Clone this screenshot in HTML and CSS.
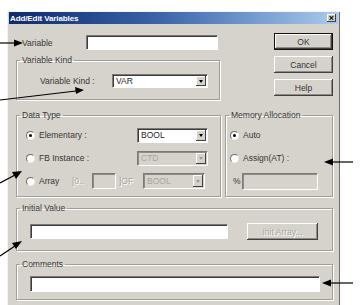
FILE: index.html
```html
<!DOCTYPE html>
<html lang="en">
<head>
  <meta charset="UTF-8">
  <meta name="viewport" content="width=device-width, initial-scale=1.0">
  <title>Add/Edit Variables</title>
  <link rel="stylesheet" href="styles.css">
</head>
<body>
  <div class="dialog">
    <div class="titlebar">
      <span class="title">Add/Edit Variables</span>
      <span class="close">&#215;</span>
    </div>

    <div class="content">
      <div class="top">
        <div class="top-left">
          <div class="var-row">
            <span class="lbl">Variable</span>
            <span class="edit var-edit"></span>
          </div>
          <fieldset class="group kind">
            <legend>Variable Kind</legend>
            <div class="kind-row">
              <span class="lbl">Variable Kind :</span>
              <span class="combo kind-combo"><span class="val">VAR</span><span class="drop"></span></span>
            </div>
          </fieldset>
        </div>
        <div class="buttons">
          <span class="btn default">OK</span>
          <span class="btn">Cancel</span>
          <span class="btn">Help</span>
        </div>
      </div>

      <div class="mid">
        <fieldset class="group datatype">
          <legend>Data Type</legend>
          <div class="dt-rows">
            <div class="dt-row">
              <span class="opt"><span class="radio on"></span>Elementary :</span>
              <span class="combo dt-combo"><span class="val">BOOL</span><span class="drop"></span></span>
            </div>
            <div class="dt-row">
              <span class="opt"><span class="radio"></span>FB Instance :</span>
              <span class="combo dt-combo off"><span class="val">CTD</span><span class="drop"></span></span>
            </div>
            <div class="dt-row">
              <span class="opt short"><span class="radio"></span>Array</span>
              <span class="dim range">[0..</span>
              <span class="edit off size-edit"></span>
              <span class="dim of">]OF</span>
              <span class="combo arr-combo off"><span class="val">BOOL</span><span class="drop"></span></span>
            </div>
          </div>
        </fieldset>

        <fieldset class="group memory">
          <legend>Memory Allocation</legend>
          <div class="mem-rows">
            <div class="mem-row"><span class="radio on"></span>Auto</div>
            <div class="mem-row"><span class="radio"></span>Assign(AT) :</div>
            <div class="mem-row pct"><span class="lbl">%</span><span class="edit off at-edit"></span></div>
          </div>
        </fieldset>
      </div>

      <fieldset class="group initial">
        <legend>Initial Value</legend>
        <div class="init-row">
          <span class="edit init-edit"></span>
          <span class="btn off init-btn">Init Array...</span>
        </div>
      </fieldset>

      <fieldset class="group comments">
        <legend>Comments</legend>
        <div class="comment-row">
          <span class="edit comment-edit"></span>
        </div>
      </fieldset>
    </div>
  </div>

  <!-- callout arrows drawn over the screenshot -->
  <svg class="arrows" width="360" height="305" viewBox="0 0 360 305">
    <g stroke="#000" stroke-width="1.2" fill="none">
      <line x1="0" y1="43" x2="15" y2="43"/>
      <line x1="0" y1="100" x2="76" y2="91"/>
      <line x1="0" y1="183" x2="15" y2="175"/>
      <line x1="353" y1="162" x2="332" y2="162"/>
      <line x1="0" y1="256" x2="15" y2="246"/>
      <line x1="353" y1="283" x2="330" y2="283"/>
    </g>
    <g fill="#000">
      <polygon points="23,43 14,39.5 14,46.5"/>
      <polygon points="84,90 75,87 76,94"/>
      <polygon points="22,171 12,172 16,179"/>
      <polygon points="324,162 333,158.5 333,165.5"/>
      <polygon points="22,241 12,243 16,249"/>
      <polygon points="322,283 331,279.5 331,286.5"/>
    </g>
  </svg>
</body>
</html>
```

FILE: styles.css
```css
body {
  margin: 0;
  width: 360px;
  height: 305px;
  overflow: hidden;
  background: #fff;
  font-family: "Liberation Sans", Arial, sans-serif;
  font-size: 8.5px;
  color: #363636;
  position: relative;
}

.dialog {
  margin: 11px 0 0 7px;
  width: 333px;
  height: 294px;
  box-sizing: border-box;
  padding: 1px 2px 0 2px;
  background: #d6d3cc;
  box-shadow: inset 1px 1px 0 #f4f3f0, inset -1px 0 0 #6e6c68;
}

.titlebar {
  height: 12px;
  display: flex;
  align-items: center;
  justify-content: space-between;
  padding: 0 2px 0 1px;
  background: linear-gradient(to right, #0d2a6e, #3a63a8 45%, #a9cbef);
}

.title {
  color: #fff;
  font-weight: bold;
  font-size: 8px;
  letter-spacing: -0.1px;
}

.close {
  width: 9px;
  height: 8px;
  line-height: 8px;
  text-align: center;
  font-size: 9px;
  font-weight: bold;
  color: #000;
  background: #d6d3cc;
  box-shadow: inset -1px -1px 0 #404040, inset 1px 1px 0 #fff;
}

.content {
  padding: 0 5px 0 7px;
}

.lbl {
  white-space: nowrap;
}

/* sunken edit box */
.edit {
  display: block;
  box-sizing: border-box;
  background: #fff;
  border: 1px solid;
  border-color: #7c7a76 #fff #fff #7c7a76;
  box-shadow: inset 1px 1px 0 #3c3b39;
}

.edit.off {
  background: #d6d3cc;
  box-shadow: inset 1px 1px 0 #8e8c88;
}

/* combo box */
.combo {
  display: flex;
  align-items: center;
  box-sizing: border-box;
  background: #fff;
  border: 1px solid;
  border-color: #7c7a76 #fff #fff #7c7a76;
  box-shadow: inset 1px 1px 0 #3c3b39;
}

.combo .val {
  flex: 1;
  padding-left: 3px;
  color: #1e1e1e;
}

.combo .drop {
  align-self: stretch;
  width: 10px;
  margin: 1px 1px 1px 0;
  background: #d6d3cc;
  box-shadow: inset -1px -1px 0 #404040, inset 1px 1px 0 #fff;
  position: relative;
}

.combo .drop::after {
  content: "";
  position: absolute;
  left: 3px;
  top: 50%;
  margin-top: -1px;
  border-left: 2px solid transparent;
  border-right: 2px solid transparent;
  border-top: 3px solid #000;
}

.combo.off {
  background: #d6d3cc;
  box-shadow: inset 1px 1px 0 #8e8c88;
}

.combo.off .val {
  color: #a6a49f;
}

.combo.off .drop::after {
  border-top-color: #9a9894;
}

/* buttons */
.btn {
  display: flex;
  align-items: center;
  justify-content: center;
  box-sizing: border-box;
  height: 17px;
  background: #d6d3cc;
  box-shadow: inset -1px -1px 0 #404040, inset 1px 1px 0 #fff, inset -2px -2px 0 #8e8c88;
  color: #333;
}

.btn.default {
  border: 1px solid #111;
}

.btn.off {
  color: #a6a49f;
  text-shadow: 1px 1px 0 #fff;
}

/* group boxes */
.group {
  margin: 0;
  padding: 0;
  min-width: 0;
  box-sizing: border-box;
  border: 1px solid #a09e99;
  box-shadow: inset 1px 1px 0 #fff, 1px 1px 0 #fff;
}

.group legend {
  margin-left: 3px;
  padding: 0 2px;
  line-height: 11px;
}

/* top area */
.top {
  display: flex;
  justify-content: space-between;
}

.top-left {
  width: 204px;
}

.var-row {
  display: flex;
  align-items: center;
  margin-top: 11px;
  height: 15px;
  padding-left: 6px;
}

.var-row .lbl {
  width: 64px;
}

.var-edit {
  width: 132px;
  height: 15px;
}

.kind {
  margin-top: 5px;
  height: 45px;
}

.kind-row {
  display: flex;
  align-items: center;
  padding: 8px 0 0 23px;
}

.kind-row .lbl {
  width: 72px;
}

.kind-combo {
  width: 96px;
  height: 14px;
}

.buttons {
  width: 59px;
  display: flex;
  flex-direction: column;
  gap: 6px;
  padding-top: 9px;
}

/* data type / memory */
.mid {
  display: flex;
  justify-content: space-between;
  margin-top: 10px;
}

.datatype {
  width: 205px;
  height: 87px;
}

.memory {
  width: 108px;
  height: 87px;
}

.dt-rows {
  display: flex;
  flex-direction: column;
  gap: 7px;
  padding: 6px 0 0 9px;
}

.dt-row {
  display: flex;
  align-items: center;
  height: 16px;
}

.opt {
  display: flex;
  align-items: center;
  width: 111px;
  white-space: nowrap;
}

.opt.short {
  width: 46px;
}

.radio {
  flex: none;
  width: 9px;
  height: 9px;
  box-sizing: border-box;
  margin-right: 4px;
  border-radius: 50%;
  background: #fff;
  border: 1px solid;
  border-color: #6e6c68 #eeece8 #eeece8 #6e6c68;
  position: relative;
}

.radio.on::after {
  content: "";
  position: absolute;
  left: 2px;
  top: 2px;
  width: 3px;
  height: 3px;
  border-radius: 50%;
  background: #000;
}

.dt-combo {
  width: 71px;
  height: 15px;
}

.dim {
  color: #a6a49f;
  text-shadow: 1px 1px 0 #fff;
}

.range {
  width: 20px;
}

.size-edit {
  width: 24px;
  height: 16px;
}

.of {
  margin-left: 3px;
  width: 24px;
}

.arr-combo {
  width: 62px;
  height: 16px;
}

.mem-rows {
  display: flex;
  flex-direction: column;
  gap: 7px;
  padding: 6px 0 0 4px;
}

.mem-row {
  display: flex;
  align-items: center;
  height: 16px;
  white-space: nowrap;
}

.mem-row.pct {
  padding-left: 3px;
}

.mem-row.pct .lbl {
  width: 9px;
}

.at-edit {
  width: 76px;
  height: 17px;
}

/* initial value / comments */
.initial {
  margin-top: 6px;
  height: 48px;
}

.init-row {
  display: flex;
  align-items: center;
  padding: 9px 0 0 13px;
}

.init-edit {
  width: 198px;
  height: 15px;
}

.init-btn {
  margin-left: 19px;
  width: 71px;
}

.comments {
  margin-top: 8px;
  height: 41px;
}

.comment-row {
  padding: 6px 0 0 13px;
}

.comment-edit {
  width: 290px;
  height: 16px;
}

.arrows {
  position: absolute;
  left: 0;
  top: 0;
  pointer-events: none;
}
```
